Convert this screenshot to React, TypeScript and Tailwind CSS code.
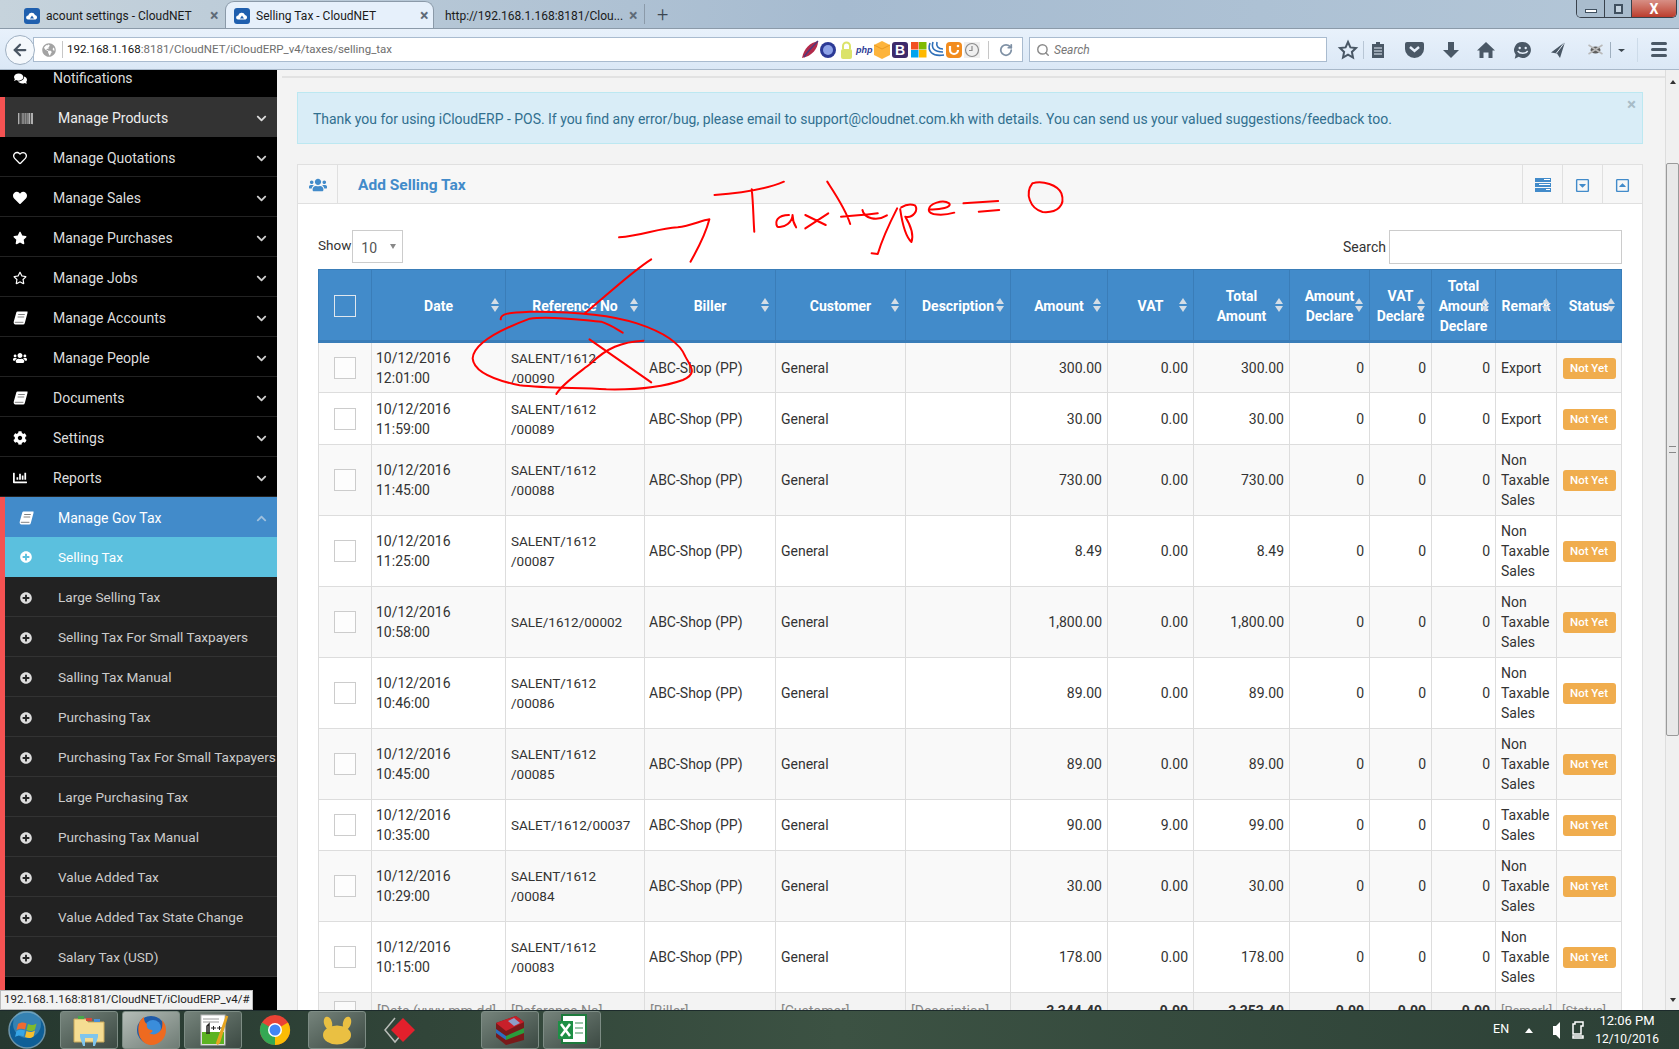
import React from "react";
import {
  FaBarcode,
  FaChartBar,
  FaChevronDown,
  FaChevronUp,
  FaCog,
  FaComments,
  FaGlobeAmericas,
  FaHeart,
  FaPlusCircle,
  FaRegCaretSquareDown,
  FaRegCaretSquareUp,
  FaRegHeart,
  FaRegStar,
  FaStar,
  FaUsers,
} from "react-icons/fa";
import { ArrowLeft, RotateCw, Search } from "lucide-react";

const FONT = "font-['Roboto','Liberation_Sans',sans-serif]";

// FontAwesome 4 style slanted book, react-icons only has the upright one
function BookIcon({ className = "" }: { className?: string }) {
  return (
    <svg width="15" height="14" viewBox="0 0 15 14" className={className}>
      <path d="M4.500 0.500H14.500V2L11.800 12A1.800 1.800 0 0 1 10 13.500H2.500C1 13.500 0.300 12 0.800 10.500L3.300 1.500A1.500 1.500 0 0 1 4.500 0.500Z" fill="currentColor" />
      <path d="M5.200 3.500H11.800M4.600 6H11.200M1.800 11.300H10.400" stroke="#000" strokeOpacity="0.55" strokeWidth="0.9" />
    </svg>
  );
}

const mainMenu = [
  { label: "Manage Quotations", icon: FaRegHeart },
  { label: "Manage Sales", icon: FaHeart },
  { label: "Manage Purchases", icon: FaStar },
  { label: "Manage Jobs", icon: FaRegStar },
  { label: "Manage Accounts", icon: BookIcon },
  { label: "Manage People", icon: FaUsers },
  { label: "Documents", icon: BookIcon },
  { label: "Settings", icon: FaCog },
  { label: "Reports", icon: FaChartBar },
];

const subMenu = [
  "Large Selling Tax",
  "Selling Tax For Small Taxpayers",
  "Salling Tax Manual",
  "Purchasing Tax",
  "Purchasing Tax For Small Taxpayers",
  "Large Purchasing Tax",
  "Purchasing Tax Manual",
  "Value Added Tax",
  "Value Added Tax State Change",
  "Salary Tax (USD)",
];

const columns = [53, 134, 139, 131, 130, 105, 97, 86, 96, 80, 62, 64, 61, 65];

const headers = [
  "",
  "Date",
  "Reference No",
  "Biller",
  "Customer",
  "Description",
  "Amount",
  "VAT",
  "Total\nAmount",
  "Amount\nDeclare",
  "VAT\nDeclare",
  "Total\nAmount\nDeclare",
  "Remark",
  "Status",
];

const rows = [
  { h: "h-[51px]", date: "10/12/2016 12:01:00", ref: "SALENT/1612 /00090", amount: "300.00", vat: "0.00", total: "300.00", remark: "Export" },
  { h: "h-[52px]", date: "10/12/2016 11:59:00", ref: "SALENT/1612 /00089", amount: "30.00", vat: "0.00", total: "30.00", remark: "Export" },
  { h: "h-[71px]", date: "10/12/2016 11:45:00", ref: "SALENT/1612 /00088", amount: "730.00", vat: "0.00", total: "730.00", remark: "Non Taxable Sales" },
  { h: "h-[71px]", date: "10/12/2016 11:25:00", ref: "SALENT/1612 /00087", amount: "8.49", vat: "0.00", total: "8.49", remark: "Non Taxable Sales" },
  { h: "h-[71px]", date: "10/12/2016 10:58:00", ref: "SALE/1612/00002", amount: "1,800.00", vat: "0.00", total: "1,800.00", remark: "Non Taxable Sales" },
  { h: "h-[71px]", date: "10/12/2016 10:46:00", ref: "SALENT/1612 /00086", amount: "89.00", vat: "0.00", total: "89.00", remark: "Non Taxable Sales" },
  { h: "h-[71px]", date: "10/12/2016 10:45:00", ref: "SALENT/1612 /00085", amount: "89.00", vat: "0.00", total: "89.00", remark: "Non Taxable Sales" },
  { h: "h-[51px]", date: "10/12/2016 10:35:00", ref: "SALET/1612/00037", amount: "90.00", vat: "9.00", total: "99.00", remark: "Taxable Sales" },
  { h: "h-[71px]", date: "10/12/2016 10:29:00", ref: "SALENT/1612 /00084", amount: "30.00", vat: "0.00", total: "30.00", remark: "Non Taxable Sales" },
  { h: "h-[71px]", date: "10/12/2016 10:15:00", ref: "SALENT/1612 /00083", amount: "178.00", vat: "0.00", total: "178.00", remark: "Non Taxable Sales" },
];

function CloudFavicon() {
  return (
    <svg width="16" height="16" viewBox="0 0 16 16" className="shrink-0">
      <rect width="16" height="16" rx="3" fill="#1f5fae" />
      <path d="M4 11.500a2 2 0 0 1 .2-4 3.600 3.600 0 0 1 6.800-.6 2.400 2.400 0 0 1 .6 4.600z" fill="#fff" />
      <path d="M6 10.500l2-3 2 3z" fill="#1f5fae" />
    </svg>
  );
}

function TabClose() {
  return <span className="text-[16px] font-bold leading-none text-[#5f6b78]">×</span>;
}

function TabBar() {
  return (
    <div className="relative flex h-[29px] shrink-0 items-end overflow-hidden border-b border-[#8b9aa9] bg-gradient-to-r from-[#c6d3dc] via-[#a6bbd0] to-[#b4c7d8] pl-[24px] text-[12px] text-[#1a1a1a]">
      <div className="flex h-[27px] w-[201px] items-center gap-[6px] pt-[2px]">
        <CloudFavicon />
        <span className="w-[158px] whitespace-nowrap">acount settings - CloudNET</span>
        <TabClose />
      </div>
      <div className="flex h-[27px] w-[209px] items-center gap-[6px] rounded-t-[9px] border border-b-0 border-[#8b9aa9] bg-[#e6f0fb] pl-[8px] pt-[2px]">
        <CloudFavicon />
        <span className="w-[158px] whitespace-nowrap">Selling Tax - CloudNET</span>
        <TabClose />
      </div>
      <div className="flex h-[27px] w-[209px] items-center gap-[6px] pl-[11px] pt-[2px]">
        <span className="w-[178px] whitespace-nowrap">http://192.168.1.168:8181/Clou...</span>
        <TabClose />
      </div>
      <div className="mb-[4px] ml-[1px] flex h-[20px] items-center border-l border-[#8b9aa9] pl-[12px] text-[20px] font-light text-[#3c4650]">+</div>
      <div className="absolute right-[2px] top-0 flex h-[18px] w-[101px] overflow-hidden rounded-b-[5px] border border-t-0 border-[#39424c] text-white">
        <div className="flex w-[28px] items-center justify-center border-r border-[#39424c] bg-[#a9bccd]">
          <span className="mt-[4px] h-[4px] w-[12px] border border-[#40505f] bg-white" />
        </div>
        <div className="flex w-[27px] items-center justify-center border-r border-[#39424c] bg-[#a9bccd]">
          <span className="h-[10px] w-[9px] border-2 border-[#40505f] bg-[#c5d3df]" />
        </div>
        <div className="flex flex-1 items-center justify-center bg-gradient-to-b from-[#d78f85] to-[#bb3b2c] text-[14px] font-bold leading-none">X</div>
      </div>
    </div>
  );
}

function ExtensionIcons() {
  return (
    <svg width="160" height="20" viewBox="0 0 160 20" className="shrink-0">
      <path d="M0 18C2 8 8 3 16 1c0 8-6 15-16 17z" fill="#b22a4a" />
      <path d="M2 17C6 11 11 6 16 1" stroke="#4d3a7d" strokeWidth="1.500" fill="none" />
      <circle cx="26" cy="10" r="8" fill="#2c3a96" />
      <circle cx="26" cy="10" r="5" fill="#8ea3e8" />
      <rect x="39" y="9" width="11" height="10" rx="2" fill="#dbe36a" />
      <path d="M41 9V6a3.500 3.500 0 0 1 7 0v3" stroke="#dbe36a" strokeWidth="2" fill="none" />
      <text x="54" y="13" fontSize="9" fontStyle="italic" fontWeight="700" fill="#2d3b96" fontFamily="Liberation Sans">php</text>
      <path d="M72 5l8-4 8 4v10l-8 4-8-4z" fill="#fdb43c" />
      <path d="M72 5l8 4 8-4" stroke="#e89a24" fill="none" />
      <rect x="90" y="2" width="16" height="16" rx="3" fill="#3d2a6b" />
      <text x="93" y="15" fontSize="14" fontWeight="700" fill="#fff" fontFamily="Liberation Sans">B</text>
      <rect x="109" y="2" width="7.500" height="7.500" fill="#f25022" />
      <rect x="117" y="2" width="7.500" height="7.500" fill="#7fba00" />
      <rect x="109" y="10" width="7.500" height="7.500" fill="#00a4ef" />
      <rect x="117" y="10" width="7.500" height="7.500" fill="#ffb900" />
      <path d="M128 3c-3 8 2 14 14 12M131 2c-2 6 1 10 10 10M135 2c-1 4 1 7 6 7" stroke="#2f6fb8" strokeWidth="1.600" fill="none" />
      <rect x="144" y="2" width="16" height="16" rx="4" fill="#f28c1e" />
      <path d="M148 6v4a4 4 0 0 0 8 0" stroke="#fff" strokeWidth="2.200" fill="none" />
      <circle cx="156" cy="6" r="1.300" fill="#fff" />
    </svg>
  );
}

function BrowserTools() {
  return (
    <svg width="340" height="28" viewBox="0 0 340 28" className="ml-[5px] shrink-0" fill="#4a5866">
      <path d="M16 6l2.400 5.400 5.600.7-4.100 3.800 1.100 5.600-5-2.800-5 2.800 1.100-5.600-4.100-3.800 5.600-.7z" fill="none" stroke="#4a5866" strokeWidth="2" />
      <rect x="31" y="5" width="1" height="18" fill="#b8c6d5" />
      <path d="M40 8h4V6h4v2h4v14H40z" />
      <path d="M42 12h8M42 15h8M42 18h8" stroke="#e6effa" strokeWidth="1" />
      <g transform="translate(3 0)">
        <path d="M72 6h15a2 2 0 0 1 2 2v5a9.500 9 0 0 1-19 0V8a2 2 0 0 1 2-2z" />
        <path d="M75 11l4.500 4 4.500-4" stroke="#e6effa" strokeWidth="2.400" fill="none" />
      </g>
      <path d="M116 6h6v8h5l-8 8-8-8h5z" />
      <path d="M154 6l9 8.500h-2.500V22h-4v-5.500h-5V22h-4v-7.500H145z" />
      <g transform="translate(10.700 0)">
        <path d="M180 6a8 8 0 1 1-4 14.800l-4 2 1-4A8 8 0 0 1 180 6z" />
        <circle cx="177" cy="12" r="1.200" fill="#e6effa" />
        <circle cx="183" cy="12" r="1.200" fill="#e6effa" />
        <path d="M175 15c2 3 8 3 10 0" stroke="#e6effa" strokeWidth="1.400" fill="none" />
      </g>
      <g transform="translate(14 0)">
        <path d="M219 6l-5 16-3-4.500-6-1z" />
        <path d="M219 6L210.500 17" stroke="#e6effa" strokeWidth="1" />
      </g>
      <g transform="translate(4.500 0)">
        <ellipse cx="259" cy="14" rx="5" ry="3.500" fill="#5d5d5d" />
        <path d="M252 9l14 9M266 9l-14 9" stroke="#b9b9b9" strokeWidth="1.500" />
      </g>
      <rect x="278" y="6" width="1" height="16" fill="#9fafbf" />
      <path d="M286 13h7l-3.500 3z" fill="#3d4750" />
      <rect x="305" y="2" width="1" height="24" fill="#cddbe9" />
      <rect x="319" y="6" width="16" height="3" rx="1.500" />
      <rect x="319" y="12" width="16" height="3" rx="1.500" />
      <rect x="319" y="18" width="16" height="3" rx="1.500" />
    </svg>
  );
}

function NavBar() {
  return (
    <div className="flex h-[41px] shrink-0 items-center border-b border-[#a8b8c9] bg-gradient-to-b from-[#e8f1fb] to-[#dbe8f6] pl-[5px] pt-[1px]">
      <div className="z-10 flex h-[30px] w-[30px] shrink-0 items-center justify-center rounded-full border border-[#9fb0c2] bg-[#f4f8fc] text-[#4a5663]">
        <ArrowLeft size={18} strokeWidth={3} />
      </div>
      <div className="-ml-[2px] flex h-[25px] w-[990px] shrink-0 items-center border border-[#a9bbcf] bg-white pl-[8px] text-[11.500px]">
        <FaGlobeAmericas className="mr-[6px] shrink-0 text-[14px] text-[#a3a3a3]" />
        <span className="border-l border-[#c7c7c7] pl-[4px] text-[#111]">192.168.1.168</span>
        <span className="text-[#6e6e6e]">:8181/CloudNET/iCloudERP_v4/taxes/selling_tax</span>
        <div className="ml-auto flex items-center pr-[9px]">
          <ExtensionIcons />
          <svg width="16" height="16" viewBox="0 0 16 16" className="ml-[2px] shrink-0">
            <rect width="16" height="16" fill="#efefef" />
            <circle cx="8" cy="8" r="6.500" fill="none" stroke="#8a8a8a" strokeWidth="1.200" />
            <path d="M8 4v4.500H5" fill="none" stroke="#8a8a8a" strokeWidth="1.200" />
          </svg>
          <span className="ml-[8px] h-[18px] border-l border-[#c7c7c7]" />
          <RotateCw size={14} strokeWidth={3} className="ml-[10px] text-[#7f91a5]" />
        </div>
      </div>
      <div className="ml-[6px] flex h-[25px] w-[298px] shrink-0 items-center gap-[4px] border border-[#a9bbcf] bg-white pl-[6px] text-[12px] italic text-[#777]">
        <Search size={14} strokeWidth={2.500} className="text-[#8b8b8b]" />
        Search
      </div>
      <BrowserTools />
    </div>
  );
}

function MenuRow({ label, icon: Icon }: { label: string; icon: React.ComponentType<{ className?: string }> }) {
  return (
    <div className="flex h-[40px] items-center border-b border-[#222] bg-black pt-[3px] text-[#ddd]">
      <span className="flex w-[40px] justify-center">
        <Icon className="text-[14px] text-white" />
      </span>
      <span className="ml-[13px] flex-1">{label}</span>
      <FaChevronDown className="mr-[10px] text-[11px] text-[#cfcfcf]" />
    </div>
  );
}

function Sidebar() {
  return (
    <aside className="flex w-[277px] shrink-0 flex-col bg-black text-[14px]">
      <div className="flex h-[27px] shrink-0 text-[#ddd]">
        <span className="flex w-[40px] justify-center pt-[2px]">
          <FaComments className="text-[13px] text-white" />
        </span>
        <span className="ml-[13px] leading-[17px]">Notifications</span>
      </div>
      <div className="flex h-[40px] items-center border-l-[5px] border-[#f55252] bg-[#333] pt-[2px] text-[#eee]">
        <FaBarcode className="ml-[13px] text-[15px] text-[#ddd]" />
        <span className="ml-[25px] flex-1">Manage Products</span>
        <FaChevronDown className="mr-[10px] text-[11px] text-[#ddd]" />
      </div>
      {mainMenu.map((item) => (
        <MenuRow key={item.label} label={item.label} icon={item.icon} />
      ))}
      <div className="flex flex-col border-l-[5px] border-[#f55252] pb-[13px]">
        <div className="flex h-[40px] items-center bg-[#428bca] pt-[2px] text-white">
          <BookIcon className="ml-[14px] shrink-0" />
          <span className="ml-[24px] flex-1">Manage Gov Tax</span>
          <FaChevronUp className="mr-[10px] text-[11px] text-[#9fc0dd]" />
        </div>
        <div className="flex h-[40px] items-center bg-[#5bc0de] text-[13.600px] text-white">
          <FaPlusCircle className="ml-[15px] text-[12px]" />
          <span className="ml-[26px]">Selling Tax</span>
        </div>
        {subMenu.map((label) => (
          <div key={label} className="flex h-[40px] items-center whitespace-nowrap border-b border-[#333] bg-[#222] pt-[2px] text-[13.600px] text-[#ccc]">
            <FaPlusCircle className="ml-[15px] shrink-0 text-[12px] text-[#ddd]" />
            <span className="ml-[26px]">{label}</span>
          </div>
        ))}
      </div>
    </aside>
  );
}

function Checkbox() {
  return <span className="mx-auto block h-[22px] w-[22px] border border-[#ccc] bg-white/60" />;
}

function SortArrows() {
  return (
    <span className="absolute right-[6px] top-1/2 flex -translate-y-1/2 flex-col gap-[2px]">
      <span className="h-0 w-0 border-x-[4px] border-b-[6px] border-x-transparent border-b-[#d4dde6]" />
      <span className="h-0 w-0 border-x-[4px] border-t-[6px] border-x-transparent border-t-[#d4dde6]" />
    </span>
  );
}

function SellingTaxTable() {
  return (
    <table className="w-[1304px] table-fixed border-collapse text-[14px] text-[#333]">
      <colgroup>
        {columns.map((w, i) => (
          <col key={i} style={{ width: w }} />
        ))}
      </colgroup>
      <thead>
        <tr className="h-[72px] bg-[#428bca] text-white">
          {headers.map((label, i) => (
            <th key={i} className="relative whitespace-pre-line border border-b-[3px] border-[#3a7db8] px-[5px] pt-[2px] text-center font-bold leading-[20px]">
              {i === 0 ? <span className="mx-auto block h-[22px] w-[22px] border border-[#dfe7ee]" /> : label}
              {i > 0 && <SortArrows />}
            </th>
          ))}
        </tr>
      </thead>
      <tbody>
        {rows.map((r, i) => (
          <tr key={r.ref} className={`${r.h} ${i % 2 === 0 ? "bg-[#f9f9f9]" : "bg-white"} [&>td]:border [&>td]:border-[#ddd] [&>td]:px-[5px] [&>td]:leading-[20px]`}>
            <td>
              <Checkbox />
            </td>
            <td className="!pl-[4px]">{r.date}</td>
            <td className="text-[13.500px]">{r.ref}</td>
            <td className="!pl-[4px]">ABC-Shop (PP)</td>
            <td>General</td>
            <td></td>
            <td className="text-right">{r.amount}</td>
            <td className="text-right">{r.vat}</td>
            <td className="text-right">{r.total}</td>
            <td className="text-right">0</td>
            <td className="text-right">0</td>
            <td className="text-right">0</td>
            <td>{r.remark}</td>
            <td className="text-center !px-0">
              <span className="inline-block h-[21px] w-[53px] rounded-[3px] bg-[#f0ad4e] text-[11.500px] font-medium leading-[21px] text-white">Not Yet</span>
            </td>
          </tr>
        ))}
        <tr className="h-[50px] bg-[#f3f3f3] align-top [&>td]:border [&>td]:border-[#ddd] [&>td]:px-[5px] [&>td]:pt-[8px]">
          <td>
            <Checkbox />
          </td>
          <td className="truncate text-[#888]">[Date (yyyy-mm-dd]</td>
          <td className="text-[#888]">[Reference No]</td>
          <td className="text-[#888]">[Biller]</td>
          <td className="text-[#888]">[Customer]</td>
          <td className="text-[#888]">[Description]</td>
          <td className="text-right font-bold">3,344.49</td>
          <td className="text-right font-bold">9.00</td>
          <td className="text-right font-bold">3,353.49</td>
          <td className="text-right font-bold">0.00</td>
          <td className="text-right font-bold">0.00</td>
          <td className="text-right font-bold">0.00</td>
          <td className="overflow-hidden whitespace-nowrap text-[13px] text-[#888]">[Remark]</td>
          <td className="overflow-hidden whitespace-nowrap text-[13px] text-[#888]">[Status]</td>
        </tr>
      </tbody>
    </table>
  );
}

// the red pen scribble drawn over the screenshot
function Annotation() {
  return (
    <svg className="pointer-events-none absolute left-0 top-0 z-20" width="1679" height="1049" viewBox="0 0 1679 1049">
      <g transform="translate(290 150) scale(0.5102 0.33333)" fill="none" stroke="#f00" strokeWidth="2" strokeLinecap="round" strokeLinejoin="round">
        <path vectorEffect="non-scaling-stroke" d="M832 135C880 130 930 120 968 95M905 118C908 160 908 200 910 245" />
        <path vectorEffect="non-scaling-stroke" d="M978 195C955 195 950 215 955 230C970 235 985 215 985 195C985 210 988 222 992 232M1010 195L1050 225M1055 190L1010 235" />
        <path vectorEffect="non-scaling-stroke" d="M1053 95C1070 135 1090 180 1098 222M1080 200C1105 198 1130 194 1152 190" />
        <path vectorEffect="non-scaling-stroke" d="M1122 180C1125 205 1150 215 1170 196M1190 175C1175 220 1160 270 1152 312L1140 310" />
        <path vectorEffect="non-scaling-stroke" d="M1196 178C1200 220 1207 260 1218 276C1224 250 1212 215 1206 200C1222 205 1232 180 1225 166C1215 160 1205 165 1198 172" />
        <path vectorEffect="non-scaling-stroke" d="M1252 178C1275 180 1298 172 1292 160C1280 148 1252 160 1252 180C1252 196 1280 198 1302 188" />
        <path vectorEffect="non-scaling-stroke" d="M1320 160L1388 153M1350 185L1390 180" />
        <path vectorEffect="non-scaling-stroke" d="M1455 100C1440 130 1450 175 1475 186C1505 190 1520 165 1512 130C1505 105 1475 90 1455 100" />
        <path vectorEffect="non-scaling-stroke" d="M645 262C690 258 720 235 760 232C785 228 805 212 822 208C815 250 800 295 785 335" />
        <path vectorEffect="non-scaling-stroke" d="M708 328C670 365 625 430 578 490" />
        <path vectorEffect="non-scaling-stroke" d="M413 508C412 490 430 488 470 485C540 484 620 490 680 520C730 545 765 580 775 620C785 650 800 670 770 690C730 712 680 720 620 718C560 713 500 715 450 706C400 690 360 665 358 625C360 580 410 540 470 506C510 496 570 510 610 515C630 525 640 538 652 548" />
        <path vectorEffect="non-scaling-stroke" d="M587 568L708 697M693 572C650 575 620 595 590 640C565 670 535 700 522 732" />
      </g>
    </svg>
  );
}

function Scrollbar() {
  return (
    <div className="flex w-[14px] shrink-0 flex-col border-l border-[#ddd] bg-[#f0f0f0]">
      <div className="flex h-[16px] shrink-0 items-center justify-center pt-[8px]">
        <span className="h-0 w-0 border-x-[3px] border-b-[4px] border-x-transparent border-b-[#333]" />
      </div>
      <div className="mt-[77px] flex h-[573px] items-center justify-center rounded-[2px] border border-[#9a9a9a] bg-[#e8e8e8]">
        <span className="h-[7px] w-[7px] border-y border-[#888]" />
      </div>
      <div className="mt-auto flex h-[16px] items-center justify-center pb-[4px]">
        <span className="h-0 w-0 border-x-[3px] border-t-[4px] border-x-transparent border-t-[#333]" />
      </div>
    </div>
  );
}

function MainContent() {
  return (
    <main className="min-w-0 flex-1 overflow-hidden bg-[#f3f3f3]">
      <div className="ml-[5px] mt-[6px] border-t-2 border-[#e2e2e2]" />
      <div className="ml-[20px] mr-[22px] mt-[14px]">
        <div className="relative flex h-[52px] items-center border border-[#bce8f1] bg-[#d9edf7] pl-[15px] pt-[2px] text-[13.960px] text-[#31708f]">
          Thank you for using iCloudERP - POS. If you find any error/bug, please email to support@cloudnet.com.kh with details. You can send us your valued suggestions/feedback too.
          <span className="absolute right-[6px] top-[3px] text-[17px] font-bold leading-[17px] text-[#a8bcc7]">×</span>
        </div>
        <section className="mt-[20px] border border-[#e0e0e0] bg-white">
          <header className="flex h-[39px] items-center border-b border-[#e0e0e0] bg-[#f7f7f7]">
            <div className="flex h-full w-[40px] items-center justify-center border-r border-[#e0e0e0] pt-[2px] text-[18px] text-[#428bca]">
              <FaUsers />
            </div>
            <h2 className="ml-[20px] flex-1 pt-[4px] text-[15.500px] font-bold text-[#428bca]">Add Selling Tax</h2>
            <div className="flex h-full w-[40px] items-center justify-center border-l border-[#e0e0e0] pt-[2px]">
              <svg width="16" height="14" viewBox="0 0 16 14" fill="#428bca">
                <rect width="16" height="4" />
                <rect y="5" width="16" height="4" />
                <rect y="10" width="16" height="4" />
                <path d="M9 1.500h6M4 6.500h11M11 11.500h4" stroke="#fff" strokeWidth="1" />
              </svg>
            </div>
            <div className="flex h-full w-[40px] items-center justify-center border-l border-[#e0e0e0] pt-[2px] text-[15px] text-[#428bca]">
              <FaRegCaretSquareDown />
            </div>
            <div className="flex h-full w-[40px] items-center justify-center border-l border-[#e0e0e0] pt-[2px] text-[15px] text-[#428bca]">
              <FaRegCaretSquareUp />
            </div>
          </header>
          <div className="px-[20px]">
            <div className="flex h-[65px] items-start justify-between pt-[26px] text-[14px] text-[#333]">
              <div className="flex items-center gap-[1px]">
                <span className="-mt-[2px] text-[13.500px]">Show</span>
                <div className="flex h-[33px] w-[51px] items-center justify-between border border-[#ccc] pl-[8px] pr-[6px] pt-[4px] text-[#555]">
                  10
                  <span className="-mt-[4px] h-0 w-0 border-x-[3px] border-t-[5px] border-x-transparent border-t-[#888]" />
                </div>
              </div>
              <div className="flex items-center gap-[3px]">
                <span>Search</span>
                <input className="h-[34px] w-[233px] border border-[#ccc] bg-white" />
              </div>
            </div>
            <SellingTaxTable />
          </div>
        </section>
      </div>
    </main>
  );
}

function TaskButton({ active = false, children }: { active?: boolean; children: React.ReactNode }) {
  return (
    <div className={`flex h-[38px] w-[58px] shrink-0 items-center justify-center rounded-[3px] border border-[#7d8c84] ${active ? "bg-gradient-to-br from-[#b5bdb8] to-[#6f7c75]" : "bg-gradient-to-br from-[#76847c] to-[#3c4a43]"}`}>
      {children}
    </div>
  );
}

function Taskbar() {
  return (
    <footer className="flex h-[39px] shrink-0 items-center border-t border-[#1c2a2b] bg-gradient-to-r from-[#26382f] via-[#3c5243] to-[#2c4036] text-white">
      <div className="flex w-[60px] shrink-0 justify-center pr-[6px]">
        <svg width="38" height="38" viewBox="0 0 38 38">
          <circle cx="19" cy="19" r="18" fill="#0f5f97" stroke="#6d94a8" strokeWidth="1.500" />
          <circle cx="19" cy="13" r="14" fill="#6fb6dc" opacity="0.4" />
          <path d="M10 13c3-2 6-2 8.500-.5l-1.500 6c-3-1-5-1-8.500.5z" fill="#ef6a31" />
          <path d="M20 13c3 1.500 5 1.500 8.500-.5L27 18.500c-3 2-5 2-8.500.5z" fill="#7fba2c" />
          <path d="M8.500 20c3-1.500 5-1.500 8.500-.5L15.500 25.500c-3-1.500-5-1.500-8.500.5z" fill="#37a6e6" />
          <path d="M18.500 20c3 1.500 5 1.500 8.500-.5l-1.500 6c-3 2-5 2-8.500.5z" fill="#f6bf2f" />
        </svg>
      </div>
      <div className="flex gap-[4px]">
        <TaskButton>
          <svg width="36" height="34" viewBox="0 0 36 34">
            <path d="M3 6h12l2 3h16v20H3z" fill="#f5dd92" stroke="#c9a95a" />
            <rect x="7" y="3" width="6" height="3" fill="#46a84a" />
            <rect x="15" y="5" width="6" height="3" fill="#d24a3a" />
            <rect x="23" y="6" width="6" height="3" fill="#4a8fd8" />
            <path d="M9 21h18v3l-3 9h-2v-8h-8v8h-2l-3-9z" fill="#7fc5ec" />
          </svg>
        </TaskButton>
        <TaskButton active>
          <svg width="34" height="34" viewBox="0 0 34 34">
            <circle cx="17" cy="17" r="14" fill="#1f5ba8" />
            <circle cx="19" cy="15" r="8" fill="#3a8ddb" />
            <path d="M6 8C2 17 5 31 17 32c9 0 15-7 15-15 0-5-2-8-4-10 1 5 0 10-3 12-3 3-7 3-10 1 3 0 4-2 3-3-4 0-6-3-5-6-3-2-3-6-3-7-2 1-3 3-4 4z" fill="#ee6a20" />
          </svg>
        </TaskButton>
        <TaskButton>
          <svg width="32" height="36" viewBox="0 0 32 36">
            <rect x="4" y="3" width="24" height="30" fill="#fff" stroke="#bbb" />
            <rect x="5" y="20" width="22" height="12" fill="#5cb322" />
            <path d="M6 7h16M6 10h16" stroke="#999" />
            <path d="M10 22v-8l2-2v10" stroke="#222" strokeWidth="1.500" fill="none" />
            <path d="M14 16h5M16.500 14v4M20 16h5M22.500 14v4" stroke="#222" />
            <path d="M30 4L21 29l-1 3 2-2z" stroke="#e6a520" strokeWidth="2.500" fill="none" />
          </svg>
        </TaskButton>
        <div className="flex w-[58px] shrink-0 items-center justify-center">
          <svg width="32" height="32" viewBox="0 0 32 32">
            <circle cx="16" cy="16" r="15" fill="#ea4335" />
            <path d="M16 16L29 8.500A15 15 0 0 1 16 31z" fill="#fbbc05" />
            <path d="M16 16L3 8.500A15 15 0 0 0 16 31z" fill="#34a853" />
            <circle cx="16" cy="16" r="7" fill="#fff" />
            <circle cx="16" cy="16" r="5.500" fill="#4285f4" />
          </svg>
        </div>
        <TaskButton>
          <svg width="34" height="30" viewBox="0 0 34 30">
            <ellipse cx="17" cy="20" rx="14" ry="9.500" fill="#eac042" />
            <ellipse cx="8" cy="8" rx="4" ry="6.500" fill="#eac042" transform="rotate(-15 8 8)" />
            <ellipse cx="27" cy="8" rx="4" ry="6.500" fill="#eac042" transform="rotate(15 27 8)" />
          </svg>
        </TaskButton>
        <div className="flex w-[107px] shrink-0 items-center pl-[13px]">
          <svg width="34" height="30" viewBox="0 0 34 30">
            <path d="M12 3L2 15l10 12 5-6" fill="none" stroke="#b9bdb9" strokeWidth="1.500" />
            <path d="M20 3l12 12-12 12-12-12z" fill="#e2202c" />
          </svg>
        </div>
        <TaskButton>
          <svg width="34" height="34" viewBox="0 0 34 34">
            <path d="M3 10l20-7 8 6v18l-18 5-10-8z" fill="#7a1a1a" />
            <path d="M3 10l10 8 18-9-8-6z" fill="#c9202a" />
            <path d="M3 16l10 7v4L3 20z" fill="#2d6fc0" />
            <path d="M13 23l18-8v5l-18 7z" fill="#2b9c3c" />
            <path d="M15 8l6-3 6 5-6 3z" fill="#8d9fc8" />
          </svg>
        </TaskButton>
        <TaskButton>
          <svg width="34" height="34" viewBox="0 0 34 34">
            <rect x="7" y="2" width="24" height="28" fill="#fff" stroke="#1d7a3c" strokeWidth="2" />
            <rect x="3" y="8" width="15" height="18" fill="#1d8f45" />
            <path d="M6 11l9 12M15 11l-9 12" stroke="#fff" strokeWidth="2.500" />
            <path d="M20 10h8M20 15h8M20 20h8" stroke="#9dc9ac" strokeWidth="2" />
          </svg>
        </TaskButton>
      </div>
      <div className="ml-auto flex items-center pr-[20px] leading-[18px]">
        <span className="mb-[3px] text-[12.500px]">EN</span>
        <span className="ml-[16px] h-0 w-0 border-x-[4px] border-b-[5px] border-x-transparent border-b-white" />
        <svg width="60" height="22" viewBox="0 0 60 22" className="ml-[7px]" fill="#fff">
          <g transform="translate(7 0)">
            <path d="M6 7h3l4-4v17l-4-4H6z" />
            <path d="M28 3h8v4h-2v8h-8V5h2zM26 17h10v2H26z" fill="none" stroke="#fff" strokeWidth="1.500" />
          </g>
        </svg>
        <div className="ml-[-5px] flex flex-col items-center">
          <span className="text-[13px]">12:06 PM</span>
          <span className="text-[12px]">12/10/2016</span>
        </div>
      </div>
    </footer>
  );
}

export default function App() {
  return (
    <div className={`relative flex h-screen w-full flex-col overflow-hidden bg-white ${FONT}`}>
      <TabBar />
      <NavBar />
      <div className="flex min-h-0 flex-1 overflow-hidden">
        <Sidebar />
        <MainContent />
        <Scrollbar />
      </div>
      <Taskbar />
      <div className="absolute left-0 top-[990px] z-30 flex h-[20px] w-[253px] items-center whitespace-nowrap border border-[#bbb] bg-[#f2f2f2] pl-[3px] text-[11.500px] text-[#222]">
        192.168.1.168:8181/CloudNET/iCloudERP_v4/#
      </div>
      <Annotation />
    </div>
  );
}
